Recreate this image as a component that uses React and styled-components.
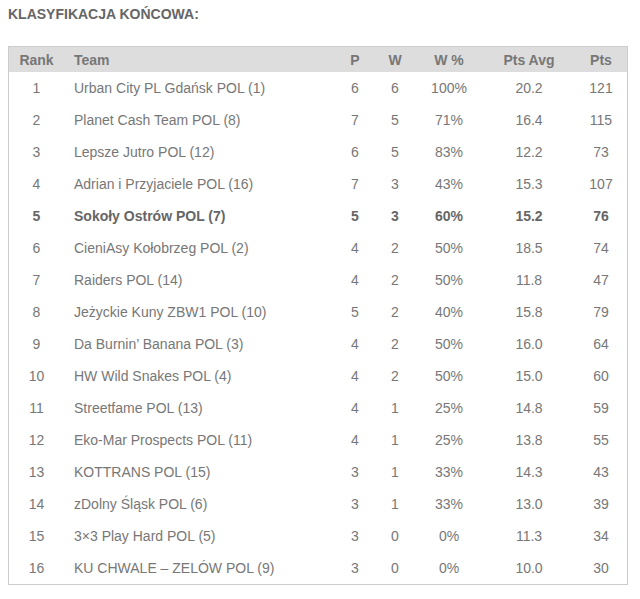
import React from 'react';
import styled, { createGlobalStyle } from 'styled-components';

const GlobalStyle = createGlobalStyle`
  body {
    margin: 0;
    background: #ffffff;
    font-family: "Liberation Sans", Arial, sans-serif;
  }
`;

const Page = styled.div`
  padding: 6px 8px 8px 8px;
  width: 640px;
  box-sizing: border-box;
`;

const Heading = styled.h2`
  margin: 0 0 24px 0;
  font-size: 14px;
  line-height: 16px;
  font-weight: bold;
  color: #666666;
`;

const Table = styled.table`
  width: 620px;
  border: 1px solid #cccccc;
  border-collapse: collapse;
  table-layout: fixed;
  font-size: 14px;
  color: #777777;
`;

const HeadCell = styled.th`
  height: 25px;
  padding: 0;
  background: #dddddd;
  font-weight: bold;
  color: #777777;
  text-align: ${(p) => (p.left ? 'left' : 'center')};
  padding-left: ${(p) => (p.left ? '10px' : '0')};
  width: ${(p) => p.w}px;
`;

const Row = styled.tr`
  font-weight: ${(p) => (p.highlight ? 'bold' : 'normal')};
  color: ${(p) => (p.highlight ? '#666666' : '#777777')};
`;

const Cell = styled.td`
  height: 32px;
  padding: 0;
  text-align: ${(p) => (p.left ? 'left' : 'center')};
  padding-left: ${(p) => (p.left ? '10px' : '0')};
  white-space: nowrap;
`;

const columns = [
  { label: 'Rank', w: 55 },
  { label: 'Team', w: 261, left: true },
  { label: 'P', w: 40 },
  { label: 'W', w: 40 },
  { label: 'W %', w: 68 },
  { label: 'Pts Avg', w: 92 },
  { label: 'Pts', w: 52 },
];

const rows = [
  [1, 'Urban City PL Gdańsk POL (1)', 6, 6, '100%', '20.2', 121],
  [2, 'Planet Cash Team POL (8)', 7, 5, '71%', '16.4', 115],
  [3, 'Lepsze Jutro POL (12)', 6, 5, '83%', '12.2', 73],
  [4, 'Adrian i Przyjaciele POL (16)', 7, 3, '43%', '15.3', 107],
  [5, 'Sokoły Ostrów POL (7)', 5, 3, '60%', '15.2', 76],
  [6, 'CieniAsy Kołobrzeg POL (2)', 4, 2, '50%', '18.5', 74],
  [7, 'Raiders POL (14)', 4, 2, '50%', '11.8', 47],
  [8, 'Jeżyckie Kuny ZBW1 POL (10)', 5, 2, '40%', '15.8', 79],
  [9, 'Da Burnin’ Banana POL (3)', 4, 2, '50%', '16.0', 64],
  [10, 'HW Wild Snakes POL (4)', 4, 2, '50%', '15.0', 60],
  [11, 'Streetfame POL (13)', 4, 1, '25%', '14.8', 59],
  [12, 'Eko-Mar Prospects POL (11)', 4, 1, '25%', '13.8', 55],
  [13, 'KOTTRANS POL (15)', 3, 1, '33%', '14.3', 43],
  [14, 'zDolny Śląsk POL (6)', 3, 1, '33%', '13.0', 39],
  [15, '3×3 Play Hard POL (5)', 3, 0, '0%', '11.3', 34],
  [16, 'KU CHWALE – ZELÓW POL (9)', 3, 0, '0%', '10.0', 30],
];

const App = () => (
  <Page>
    <GlobalStyle />
    <Heading>KLASYFIKACJA KOŃCOWA:</Heading>
    <Table>
      <thead>
        <tr>
          {columns.map((c) => (
            <HeadCell key={c.label} w={c.w} left={c.left}>
              {c.label}
            </HeadCell>
          ))}
        </tr>
      </thead>
      <tbody>
        {rows.map((r) => (
          <Row key={r[0]} highlight={r[0] === 5}>
            {r.map((v, i) => (
              <Cell key={i} left={i === 1}>
                {v}
              </Cell>
            ))}
          </Row>
        ))}
      </tbody>
    </Table>
  </Page>
);

export default App;
